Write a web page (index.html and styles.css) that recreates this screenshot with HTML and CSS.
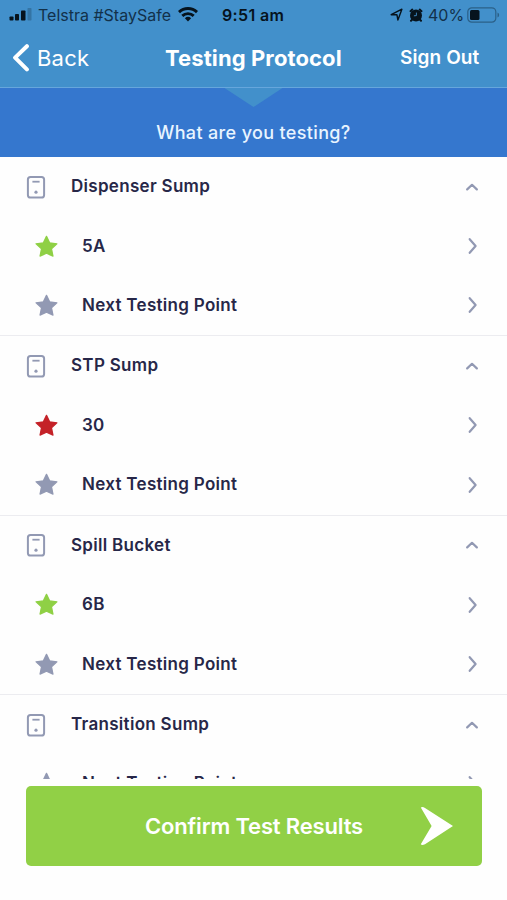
FILE: index.html
```html
<!DOCTYPE html>
<html lang="en">
<head>
<meta charset="utf-8">
<title>Testing Protocol</title>
<link rel="stylesheet" href="styles.css">
</head>
<body>
<svg class="defs" width="0" height="0" aria-hidden="true">
  <symbol id="device" viewBox="0 0 20 24"><rect x="1.9" y="1.9" width="16.2" height="20.6" rx="2.6" fill="none" stroke="currentColor" stroke-width="2"/><path d="M6.400 6.700h7.200" stroke="currentColor" stroke-width="1.800"/><circle cx="10" cy="17.200" r="1.600" fill="currentColor"/></symbol>
  <symbol id="star" viewBox="0 0 24 24"><path d="M12 2.200l3 6.300 7 .9-5.200 4.800 1.400 7L12 18.500l-6.200 2.700 1.400-7L2 9.400l7-.9z" fill="currentColor" stroke="currentColor" stroke-width="1.200" stroke-linejoin="round"/></symbol>
  <symbol id="up" viewBox="0 0 12 8"><path d="M1.200 6.400L6 1.800l4.800 4.600" fill="none" stroke="currentColor" stroke-width="2.200" stroke-linecap="round" stroke-linejoin="round"/></symbol>
  <symbol id="right" viewBox="0 0 10 18"><path d="M1.700 2.200L7.600 9l-5.900 6.800" fill="none" stroke="currentColor" stroke-width="2.200" stroke-linecap="round" stroke-linejoin="round"/></symbol>
</svg>
<header class="top">
  <div class="status">
    <svg class="signal" viewBox="0 0 23 13"><rect x="0.500" y="8.500" width="4" height="4" rx=".8"/><rect x="6" y="6" width="4" height="6.500" rx=".8"/><rect x="12" y="2.500" width="4.500" height="10" rx=".8"/><rect x="18.500" y="0" width="4" height="12.500" rx=".8" opacity=".22"/></svg>
    <span class="carrier">Telstra #StaySafe</span>
    <svg class="wifi" viewBox="0 0 20 15"><g fill="none" stroke="currentColor" stroke-width="2.900"><path d="M1 5.100a13 13 0 0 1 18 0"/><path d="M4.300 8.900a8.300 8.300 0 0 1 11.400 0"/></g><path d="M6.900 11.200a4.500 4.500 0 0 1 6.200 0L10 14.600z"/></svg>
    <span class="time">9:51 am</span>
    <svg class="locate" viewBox="0 0 13 13"><path d="M1.200 6.700L11.900 1.200 7.900 12 6.900 6.700z" fill="none" stroke="currentColor" stroke-width="1.400" stroke-linejoin="round"/></svg>
    <svg class="alarm" viewBox="0 0 14 14"><circle cx="7" cy="7.400" r="6"/><path d="M1.500 3.200l1.800-1.600M12.500 3.200l-1.800-1.600M3 11.800l-1 1M11 11.800l1 1" stroke="currentColor" stroke-width="2" stroke-linecap="round"/><path d="M7.400 4.600v3L4.900 7.800" fill="none" stroke="#4290cb" stroke-width=".9"/></svg>
    <span class="percent">40%</span>
    <svg class="battery" viewBox="0 0 33 16"><rect x=".8" y=".8" width="28" height="14.400" rx="4" fill="none" stroke="#2b6088" stroke-width="1.200"/><rect x="3" y="3" width="9.500" height="10" rx="1.500"/><path d="M30.500 5.500q1.700.6 1.700 2.500t-1.700 2.500z" fill="#2b6088"/></svg>
  </div>
  <nav class="nav">
    <svg class="chevron" viewBox="0 0 18 28"><path d="M14.900 2.200L3.100 13.600l11.800 11.800" fill="none" stroke="currentColor" stroke-width="4" stroke-linecap="round" stroke-linejoin="round"/></svg>
    <span class="back">Back</span>
    <h1 class="title">Testing Protocol</h1>
    <span class="signout">Sign Out</span>
  </nav>
</header>
<div class="banner"><p class="question">What are you testing?</p></div>
<main class="list">
  <section class="group">
    <div class="head"><svg class="device"><use href="#device"/></svg><h2 class="label">Dispenser Sump</h2><svg class="up"><use href="#up"/></svg></div>
    <div class="row"><svg class="star green"><use href="#star"/></svg><span class="label">5A</span><svg class="right"><use href="#right"/></svg></div>
    <div class="row"><svg class="star"><use href="#star"/></svg><span class="label">Next Testing Point</span><svg class="right"><use href="#right"/></svg></div>
  </section>
  <section class="group">
    <div class="head"><svg class="device"><use href="#device"/></svg><h2 class="label">STP Sump</h2><svg class="up"><use href="#up"/></svg></div>
    <div class="row"><svg class="star red"><use href="#star"/></svg><span class="label">30</span><svg class="right"><use href="#right"/></svg></div>
    <div class="row"><svg class="star"><use href="#star"/></svg><span class="label">Next Testing Point</span><svg class="right"><use href="#right"/></svg></div>
  </section>
  <section class="group">
    <div class="head"><svg class="device"><use href="#device"/></svg><h2 class="label">Spill Bucket</h2><svg class="up"><use href="#up"/></svg></div>
    <div class="row"><svg class="star green"><use href="#star"/></svg><span class="label">6B</span><svg class="right"><use href="#right"/></svg></div>
    <div class="row"><svg class="star"><use href="#star"/></svg><span class="label">Next Testing Point</span><svg class="right"><use href="#right"/></svg></div>
  </section>
  <section class="group">
    <div class="head"><svg class="device"><use href="#device"/></svg><h2 class="label">Transition Sump</h2><svg class="up"><use href="#up"/></svg></div>
    <div class="row"><svg class="star"><use href="#star"/></svg><span class="label">Next Testing Point</span><svg class="right"><use href="#right"/></svg></div>
  </section>
</main>
<footer class="footer">
  <button class="confirm"><span class="confirm-text">Confirm Test Results</span><svg class="arrow" viewBox="0 0 34 40"><path d="M.8 1.500Q2.500.5 5 1.900L33 20 5 38.200Q2 39.500.8 38.300L11.600 20z" fill="#fff"/></svg></button>
</footer>
</body>
</html>
```
FILE: styles.css
```css
* { box-sizing: border-box; }
body {
  margin: 0;
  height: 900px;
  display: flex;
  flex-direction: column;
  overflow: hidden;
  background: #fefefe;
  color: #272748;
  font-family: Inter, "Liberation Sans", sans-serif;
}
svg { display: block; flex: none; fill: currentColor; }
.defs { position: absolute; }
h1, h2, p { margin: 0; }
span, h1, h2, p { white-space: nowrap; }

.top { height: 88px; background: #4290cb; border-bottom: 1px solid #66a6dc; }
.status { height: 29px; display: flex; align-items: center; color: #06131d; font-size: 16px; }
.signal { width: 23px; height: 13px; margin-left: 9px; }
.carrier { width: 134px; margin-left: 6px; color: #12314a; }
.wifi { width: 20px; height: 15px; margin-left: 6px; }
.time { width: 64px; margin-left: 24px; font-weight: 600; letter-spacing: 0.35px; }
.locate { width: 13px; height: 13px; margin-left: 104px; margin-right: 6px; }
.alarm { width: 14px; height: 14px; }
.percent { width: 36px; margin-left: 5px; color: #12314a; }
.battery { width: 33px; height: 16px; margin-left: 3px; }

.nav { height: 57px; display: flex; align-items: center; color: #fff; }
.chevron { width: 18px; height: 28px; margin-left: 12px; }
.back { width: 54px; margin-left: 7px; font-size: 22px; letter-spacing: 0.2px; }
.title { width: 180px; margin-left: 74px; font-size: 22px; font-weight: 700; letter-spacing: 0.1px; }
.signout { margin-left: 55px; font-size: 19px; font-weight: 600; letter-spacing: 0.1px; }

.banner { height: 69px; background: #3577ce; display: flex; flex-direction: column; align-items: center; }
.banner::before {
  content: "";
  width: 58px;
  height: 19px;
  background: #4290cb;
  clip-path: polygon(0 0, 100% 0, 50% 100%);
}
.question { margin-top: 14px; line-height: 24px; font-size: 18px; font-weight: 500; letter-spacing: 0.35px; color: #e8f4ff; }

.list { height: 622px; overflow: hidden; }
.group { height: 179.3px; border-bottom: 1px solid #ececf0; }
.head, .row { display: flex; align-items: center; height: 59.4px; color: #9299b3; }
.head { padding: 0 29px 0 26px; }
.row { padding: 0 29px 0 34px; }
.device { width: 20px; height: 24px; margin-right: 25px; }
.star { width: 25px; height: 25px; margin-right: 23px; }
.green { color: #8fd045; }
.red { color: #c42228; }
.label { flex: 1; padding-bottom: 1px; color: #272748; font-size: 17px; font-weight: 600; letter-spacing: 0.3px; }
.up { width: 12px; height: 8px; }
.right { width: 10px; height: 18px; }

.footer { height: 121px; padding: 7px 25px 0 26px; }
.confirm {
  width: 100%;
  height: 80px;
  display: flex;
  align-items: center;
  justify-content: space-between;
  border: 0;
  border-radius: 5px;
  padding: 0 28px 0 119px;
  background: #91d046;
  color: #fff;
  font: 600 22px Inter, "Liberation Sans", sans-serif;
  letter-spacing: -0.17px;
}
.arrow { width: 34px; height: 40px; }
```
